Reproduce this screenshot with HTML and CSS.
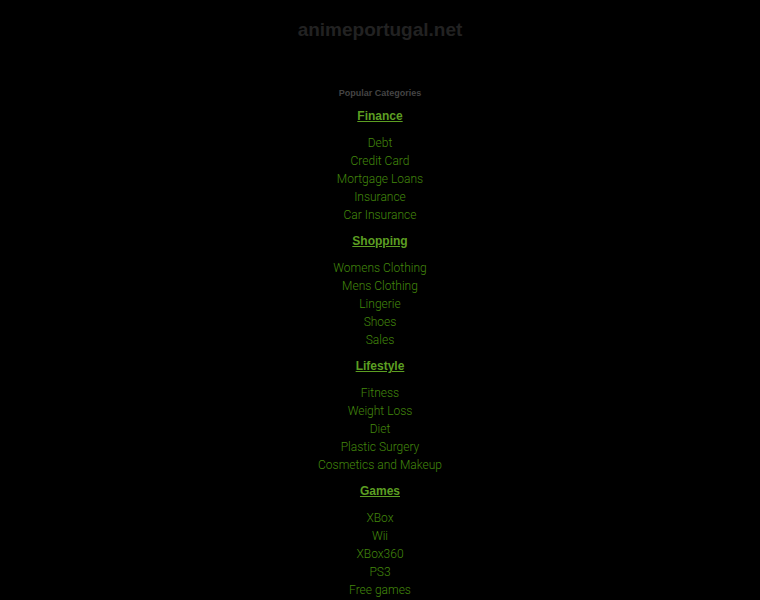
FILE: index.html
```html
<!DOCTYPE html>
<html>
<head>
<meta charset="utf-8">
<link rel="stylesheet" href="styles.css">
</head>
<body>
<div class="page">
  <h1 class="title">animeportugal.net</h1>
  <div class="popular">Popular Categories</div>
  <div class="cats">
    <div class="cat">
      <a class="head" href="#">Finance</a>
      <ul class="items">
        <li><a href="#">Debt</a></li>
        <li><a href="#">Credit Card</a></li>
        <li><a href="#">Mortgage Loans</a></li>
        <li><a href="#">Insurance</a></li>
        <li><a href="#">Car Insurance</a></li>
      </ul>
    </div>
    <div class="cat">
      <a class="head" href="#">Shopping</a>
      <ul class="items">
        <li><a href="#">Womens Clothing</a></li>
        <li><a href="#">Mens Clothing</a></li>
        <li><a href="#">Lingerie</a></li>
        <li><a href="#">Shoes</a></li>
        <li><a href="#">Sales</a></li>
      </ul>
    </div>
    <div class="cat">
      <a class="head" href="#">Lifestyle</a>
      <ul class="items">
        <li><a href="#">Fitness</a></li>
        <li><a href="#">Weight Loss</a></li>
        <li><a href="#">Diet</a></li>
        <li><a href="#">Plastic Surgery</a></li>
        <li><a href="#">Cosmetics and Makeup</a></li>
      </ul>
    </div>
    <div class="cat">
      <a class="head" href="#">Games</a>
      <ul class="items">
        <li><a href="#">XBox</a></li>
        <li><a href="#">Wii</a></li>
        <li><a href="#">XBox360</a></li>
        <li><a href="#">PS3</a></li>
        <li><a href="#">Free games</a></li>
      </ul>
    </div>
  </div>
</div>
</body>
</html>
```

FILE: styles.css
```css
html, body {
  margin: 0;
  padding: 0;
  background: #000;
}
.page {
  display: flex;
  flex-direction: column;
  align-items: center;
  font-family: "Liberation Sans", Arial, sans-serif;
  text-align: center;
}
.title {
  margin: 17px 0 0;
  font-size: 19px;
  line-height: 26px;
  font-weight: bold;
  color: #222;
}
.popular {
  margin-top: 43px;
  font-size: 9px;
  line-height: 14px;
  font-weight: bold;
  color: #444;
}
.cats {
  display: flex;
  flex-direction: column;
  align-items: center;
  margin-top: 7px;
  gap: 8px;
}
.cat {
  display: flex;
  flex-direction: column;
  align-items: center;
}
.head {
  font-size: 12px;
  line-height: 18px;
  font-weight: bold;
  color: #5c9e22;
  text-decoration: underline;
}
.items {
  list-style: none;
  margin: 9px 0 0;
  padding: 0;
}
.items li {
  font-family: Roboto, "Liberation Sans", sans-serif;
  font-weight: 300;
  font-size: 12px;
  line-height: 18px;
}
.items a {
  color: #43880c;
  text-decoration: none;
}
```
